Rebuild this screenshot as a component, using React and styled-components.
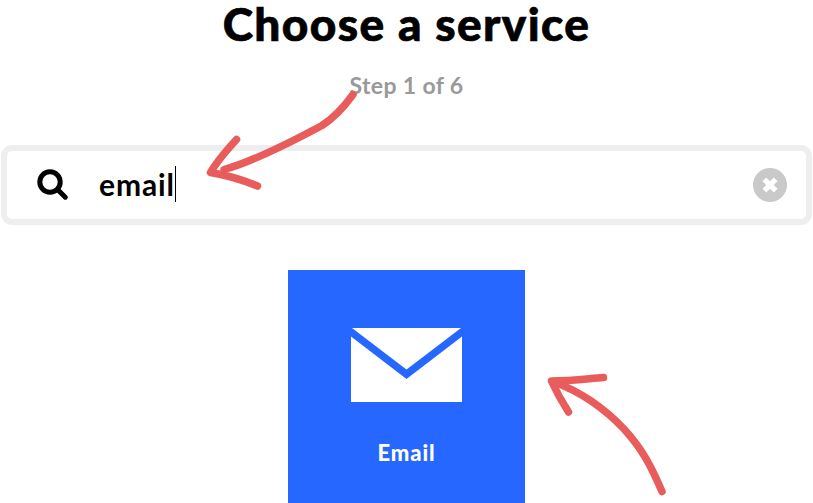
import React from 'react'
import styled, { createGlobalStyle } from "styled-components";


function App() {
	return (
		<PageWrapper>
			<GlobalStyle />

			<Title>Choose a service</Title>
			<StepText>Step 1 of 6</StepText>

			<SearchBox>
				<SearchIcon viewBox="0 0 32 32">
					<circle cx="13" cy="13" r="10.2" />
					<path d="M20.8 20.8 L28.3 28.2" />
				</SearchIcon>
				<SearchText>email</SearchText>
				<Caret />
				<ClearButton aria-label="Clear">
					<ClearIcon viewBox="0 0 34 34">
						<path d="M11.300 11.300 L22.700 22.700 M22.700 11.300 L11.300 22.700" />
					</ClearIcon>
				</ClearButton>
			</SearchBox>

			<ServiceTile>
				<Envelope viewBox="0 0 111 74">
					<path d="M1 0 H110 L55.5 41.5 Z" />
					<path d="M0 8.5 L55.5 51 L111 8.5 V74 H0 Z" />
				</Envelope>
				<TileLabel>Email</TileLabel>
			</ServiceTile>

			<Arrows viewBox="0 0 813 503">
				<path d="M353 94.500 C344 107 332 119 322 125.500 C295 140 255 161 224 169.500" />
				<path d="M236.500 139.500 C226 151 216 163 210.500 172.500 C226 175 243 180 257.500 186" />
				<path d="M662 491.500 C651 466 643 450 624 429 C605 409 584 393 554 382" />
				<path d="M603.500 377.500 C585 379 570 381 551.500 381 C556 391 562 402 568.500 412" />
			</Arrows>
		</PageWrapper>
	);
}

export default App

const GlobalStyle = createGlobalStyle`
body {
	margin: 0;
	background: #fff;
	overflow: hidden;
}
`

const PageWrapper = styled.div`
position: relative;
display: flex;
flex-direction: column;
align-items: center;
box-sizing: border-box;
width: 813px;
height: 503px;
overflow: hidden;
font-family: Lato, "Open Sans", sans-serif;

> * {
	flex-shrink: 0;
}
`

const Title = styled.h1`
margin: 0;
height: 50px;
line-height: 48px;
font-size: 46px;
font-weight: 900;
letter-spacing: 1.4px;
-webkit-text-stroke: 0.7px #000;
white-space: nowrap;
color: #000;
`

const StepText = styled.p`
margin: 20px 0 0;
height: 30px;
line-height: 30px;
font-size: 23px;
font-weight: 700;
letter-spacing: 0.35px;
color: #999;
`

const SearchBox = styled.div`
display: flex;
align-items: center;
box-sizing: border-box;
width: 811px;
height: 80px;
margin-top: 45px;
padding: 0 19px 0 30px;
border: 6px solid #eee;
border-radius: 11px;
`

const SearchIcon = styled.svg`
width: 32px;
height: 32px;
margin-right: 30px;
fill: none;
stroke: #000;
stroke-width: 5;
stroke-linecap: round;
`

const SearchText = styled.span`
padding-bottom: 2px;
font-size: 30px;
font-weight: 700;
letter-spacing: 0.9px;
line-height: 36px;
color: #000;
`

const Caret = styled.span`
width: 1px;
height: 36px;
margin-bottom: 2px;
background: #000;
`

const ClearButton = styled.button`
display: flex;
width: 34px;
height: 34px;
margin-left: auto;
margin-bottom: 1px;
padding: 0;
border: none;
border-radius: 50%;
background: #c9c9c9;
`

const ClearIcon = styled.svg`
width: 34px;
height: 34px;
stroke: #fff;
stroke-width: 5.3;
`

const ServiceTile = styled.div`
display: flex;
flex-direction: column;
align-items: center;
box-sizing: border-box;
width: 237px;
height: 237px;
margin-top: 45px;
padding-top: 57.5px;
background: #2668ff;
`

const Envelope = styled.svg`
width: 111px;
height: 74px;
fill: #fff;
`

const TileLabel = styled.span`
margin-top: 36.5px;
line-height: 30px;
font-size: 22px;
font-weight: 900;
letter-spacing: 0.9px;
color: #fff;
`

const Arrows = styled.svg`
position: absolute;
top: 0;
left: 0;
width: 813px;
height: 503px;
pointer-events: none;
fill: none;
stroke: #e95c5c;
stroke-width: 7.5;
stroke-linecap: round;
stroke-linejoin: round;
`
